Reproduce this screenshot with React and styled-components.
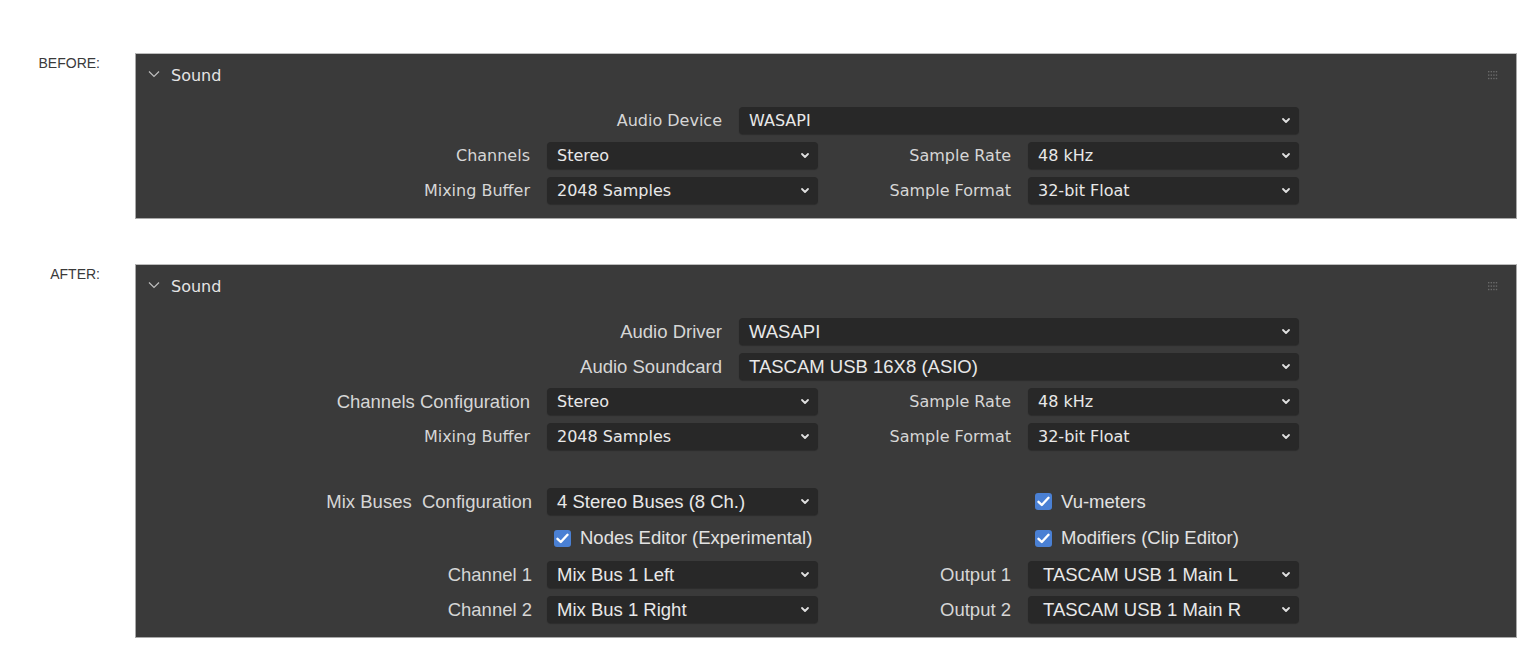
import styled, { createGlobalStyle } from 'styled-components';

const GlobalStyle = createGlobalStyle`
  body {
    margin: 0;
    background: #ffffff;
    font-family: "Liberation Sans", Arial, sans-serif;
  }
`;

const fonts = {
  blender: `font-family: "DejaVu Sans", sans-serif; font-size: 16px;`,
  mock: `font-family: "Liberation Sans", Arial, sans-serif; font-size: 18.5px;`,
};

const Chevron = () => (
  <svg width='10' height='7' viewBox='0 0 10 7'>
    <path d='M2 2 L5 5 L8 2' fill='none' stroke='#e0e0e0' strokeWidth='1.8' strokeLinecap='round' strokeLinejoin='round' />
  </svg>
);

const Dropdown = ({ value, ui = 'blender', indent }) => (
  <Select $indent={indent}>
    <Value $ui={ui}>{value}</Value>
    <Chevron />
  </Select>
);

const Checkbox = ({ label }) => (
  <Check>
    <Box>
      <svg width='13' height='11' viewBox='0 0 13 11'>
        <path d='M1.5 5.8 L4.8 9 L11.5 1.8' fill='none' stroke='#ffffff' strokeWidth='2.4' strokeLinecap='round' strokeLinejoin='round' />
      </svg>
    </Box>
    <CheckText>{label}</CheckText>
  </Check>
);

const PanelHeader = () => (
  <Header>
    <HeaderTitle>
      <svg width='12' height='8' viewBox='0 0 12 8'>
        <path d='M1 1.5 L6 6.5 L11 1.5' fill='none' stroke='#bdbdbd' strokeWidth='1.2' />
      </svg>
      <span>Sound</span>
    </HeaderTitle>
    <svg width='10' height='10' viewBox='0 0 10 10'>
      {[0, 1, 2, 3].map((c) =>
        [0, 1, 2].map((r) => (
          <rect key={`${c}-${r}`} x={c * 2.6} y={r * 3.4} width='1.4' height='1.4' fill='#6a6a6a' />
        ))
      )}
    </svg>
  </Header>
);

const App = () => {
  return (
    <Page>
      <GlobalStyle />
      <Section>
        <Tag>BEFORE:</Tag>
        <Panel>
          <PanelHeader />
          <Body>
            <WideRow>
              <Label>Audio Device</Label>
              <Dropdown value='WASAPI' />
            </WideRow>
            <Row>
              <Label>Channels</Label>
              <Dropdown value='Stereo' />
              <Label>Sample Rate</Label>
              <Dropdown value='48 kHz' />
            </Row>
            <Row>
              <Label>Mixing Buffer</Label>
              <Dropdown value='2048 Samples' />
              <Label>Sample Format</Label>
              <Dropdown value='32-bit Float' />
            </Row>
          </Body>
        </Panel>
      </Section>

      <Section>
        <Tag>AFTER:</Tag>
        <Panel>
          <PanelHeader />
          <Body>
            <WideRow>
              <Label $ui='mock'>Audio Driver</Label>
              <Dropdown value='WASAPI' ui='mock' />
            </WideRow>
            <WideRow>
              <Label $ui='mock'>Audio Soundcard</Label>
              <Dropdown value='TASCAM USB 16X8 (ASIO)' ui='mock' />
            </WideRow>
            <Row>
              <Label $ui='mock'>Channels Configuration</Label>
              <Dropdown value='Stereo' />
              <Label>Sample Rate</Label>
              <Dropdown value='48 kHz' />
            </Row>
            <Row>
              <Label>Mixing Buffer</Label>
              <Dropdown value='2048 Samples' />
              <Label>Sample Format</Label>
              <Dropdown value='32-bit Float' />
            </Row>
            <Spacer />
            <Row>
              <Label $ui='mock' $shift>Mix Buses&nbsp; Configuration</Label>
              <Dropdown value='4 Stereo Buses (8 Ch.)' ui='mock' />
              <span />
              <Checkbox label='Vu-meters' />
            </Row>
            <Row $tall>
              <span />
              <Checkbox label='Nodes Editor (Experimental)' />
              <span />
              <Checkbox label='Modifiers (Clip Editor)' />
            </Row>
            <Row>
              <Label $ui='mock' $shift>Channel 1</Label>
              <Dropdown value='Mix Bus 1 Left' ui='mock' />
              <Label $ui='mock'>Output 1</Label>
              <Dropdown value='TASCAM USB 1 Main L' ui='mock' indent />
            </Row>
            <Row>
              <Label $ui='mock' $shift>Channel 2</Label>
              <Dropdown value='Mix Bus 1 Right' ui='mock' />
              <Label $ui='mock'>Output 2</Label>
              <Dropdown value='TASCAM USB 1 Main R' ui='mock' indent />
            </Row>
          </Body>
        </Panel>
      </Section>
    </Page>
  );
};

const Page = styled.div`
  padding-top: 53px;
  display: flex;
  flex-direction: column;
  gap: 45px;
`;

const Section = styled.div`
  display: flex;
  align-items: flex-start;
`;

const Tag = styled.div`
  width: 100px;
  padding-top: 2px;
  text-align: right;
  font-family: "Liberation Sans", Arial, sans-serif;
  font-size: 14px;
  line-height: 16px;
  color: #3a3a3a;
  margin-right: 35px;
`;

const Panel = styled.div`
  width: 1380px;
  background: #3a3a3a;
  border: 1px solid #a8a8a8;
  border-top-color: #bdbdbd;
`;

const Header = styled.div`
  height: 43px;
  display: flex;
  align-items: center;
  justify-content: space-between;
  padding: 0 18px 0 12px;
`;

const HeaderTitle = styled.div`
  display: flex;
  align-items: center;
  gap: 11px;
  color: #e4e4e4;
  font-family: "DejaVu Sans", sans-serif;
  font-size: 16px;

  svg {
    margin-top: -3px;
  }
`;

const Body = styled.div`
  display: flex;
  flex-direction: column;
  gap: 8px;
  padding: 10px 0 14px;
`;

const Row = styled.div`
  display: grid;
  grid-template-columns: 411px 271px 210px 271px;
  height: ${({ $tall }) => ($tall ? '30px' : '27px')};
  align-items: center;
`;

const WideRow = styled.div`
  display: grid;
  grid-template-columns: 603px 560px;
  height: 27px;
  align-items: center;
`;

const Spacer = styled.div`
  height: 22px;
`;

const Label = styled.div`
  ${({ $ui }) => fonts[$ui || 'blender']}
  text-align: right;
  padding-right: ${({ $shift }) => ($shift ? '15px' : '17px')};
  color: #d6d6d6;
  white-space: nowrap;
`;

const Select = styled.div`
  height: 27px;
  box-sizing: border-box;
  display: flex;
  align-items: center;
  justify-content: space-between;
  padding: 0 8px 0 ${({ $indent }) => ($indent ? '15px' : '10px')};
  background: #282828;
  border-radius: 4px;
  box-shadow: 0 1px 1px rgba(0, 0, 0, 0.25);
`;

const Value = styled.span`
  ${({ $ui }) => fonts[$ui]}
  color: #e8e8e8;
  white-space: nowrap;
`;

const Check = styled.div`
  display: flex;
  align-items: center;
  gap: 9px;
  padding-left: 7px;
  ${fonts.mock}
  color: #e2e2e2;
  white-space: nowrap;
`;

const Box = styled.div`
  width: 17px;
  height: 17px;
  border-radius: 3px;
  background: #4a80d4;
  display: flex;
  align-items: center;
  justify-content: center;
  flex-shrink: 0;
`;

const CheckText = styled.span``;

export default App;
